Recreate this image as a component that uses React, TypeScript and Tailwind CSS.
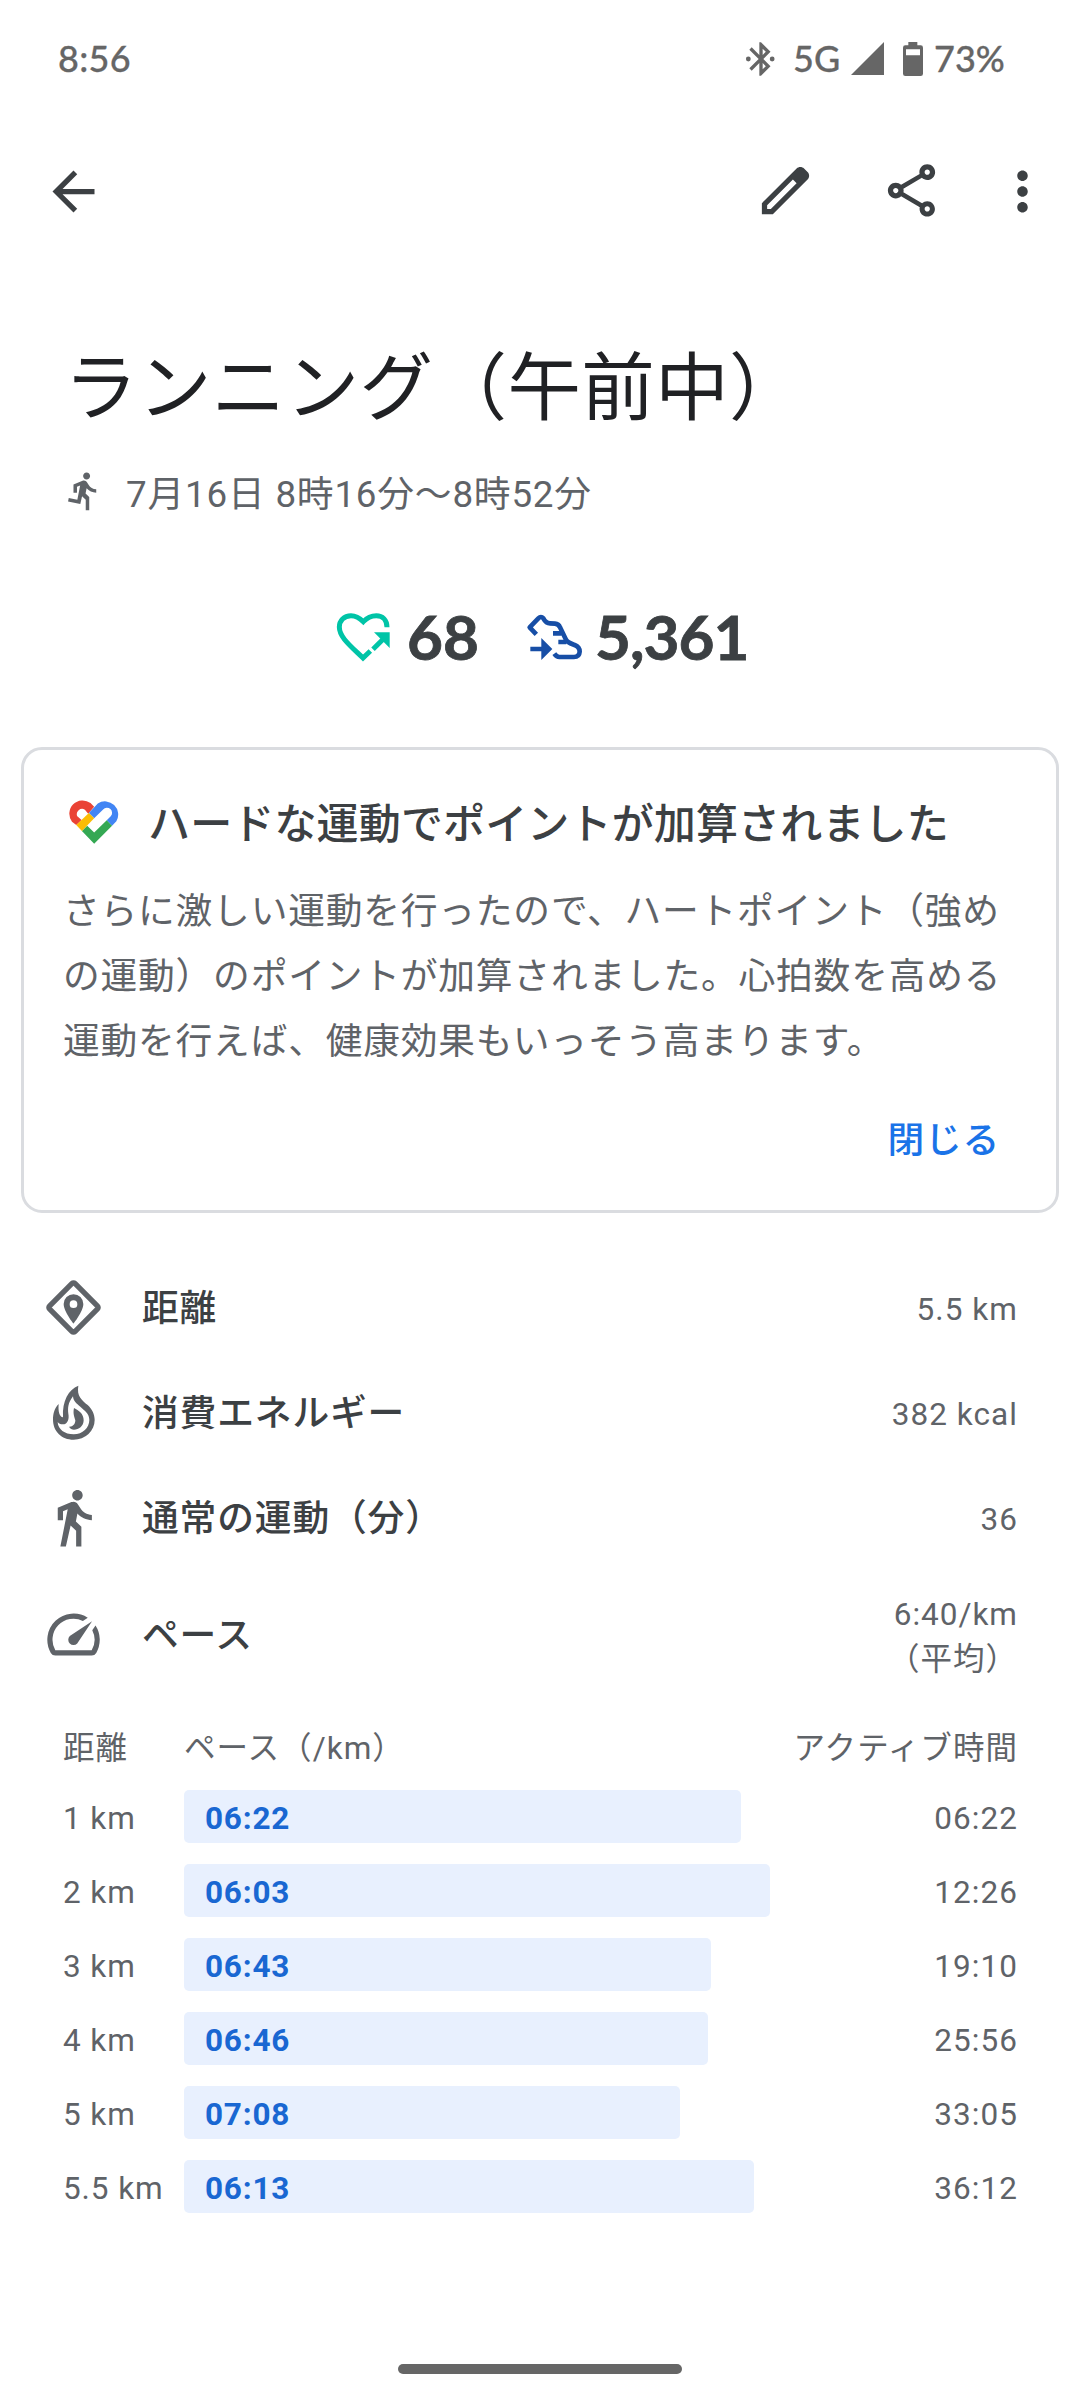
import type { ReactNode } from 'react'
import { MdArrowBack, MdMoreVert, MdOutlineShare, MdSpeed } from 'react-icons/md'

const splits = [
  { distance: '1 km', pace: '06:22', time: '06:22', width: 557 },
  { distance: '2 km', pace: '06:03', time: '12:26', width: 586 },
  { distance: '3 km', pace: '06:43', time: '19:10', width: 527 },
  { distance: '4 km', pace: '06:46', time: '25:56', width: 524 },
  { distance: '5 km', pace: '07:08', time: '33:05', width: 496 },
  { distance: '5.5 km', pace: '06:13', time: '36:12', width: 570 },
]

function BluetoothIcon() {
  return (
    <svg className="size-[40px]" viewBox="0 0 24 24" fill="currentColor">
      <path d="M17.71 7.71 12 2h-1v7.59L6.41 5 5 6.41 10.59 12 5 17.59 6.41 19 11 14.41V22h1l5.71-5.71-4.3-4.29 4.3-4.29zM13 5.83l1.88 1.88L13 9.59V5.83zm1.88 10.46L13 18.17v-3.76l1.88 1.88z" />
      <circle cx="4.4" cy="12" r="1.45" />
      <circle cx="18.7" cy="12" r="1.45" />
    </svg>
  )
}

function BatteryIcon() {
  return (
    <svg className="h-[34px] w-5" viewBox="0 0 60 102">
      <path
        fill="currentColor"
        fillRule="evenodd"
        d="M16 0h27v10h10q7 0 7 7v78q0 7-7 7H7q-7 0-7-7V17q0-7 7-7h9zM9 22v18h42V22z"
      />
    </svg>
  )
}

function EditIcon() {
  return (
    <svg className="size-[63px]" viewBox="0 0 24 24" fill="currentColor">
      <path d="M20.41 4.94l-1.35-1.35c-.78-.78-2.05-.78-2.83 0L3 16.82V21h4.18L20.41 7.77c.79-.78.79-2.05 0-2.83zm-14 14.12L5 19v-1.36l9.82-9.82 1.41 1.41-9.82 9.83z" />
    </svg>
  )
}

function RunIcon() {
  return (
    <svg className="size-[42px]" viewBox="0 0 24 24" fill="currentColor">
      <path d="M13.49 5.48c1.1 0 2-.9 2-2s-.9-2-2-2-2 .9-2 2 .9 2 2 2zm-3.6 13.9l1-4.4 2.1 2v6h2v-7.5l-2.1-2 .6-3c1.3 1.5 3.3 2.5 5.5 2.5v-2c-1.9 0-3.5-1-4.3-2.4l-1-1.6c-.4-.6-1-1-1.7-1-.3 0-.5.1-.8.1l-5.2 2.2v4.7h2v-3.4l1.8-.7-1.6 8.1-4.9-1-.4 2 7 1.4z" />
    </svg>
  )
}

function HeartPointsIcon() {
  return (
    <svg className="h-[50px] w-[56px]" viewBox="34 38 168 150">
      <path
        fill="none"
        stroke="#00c4a7"
        strokeWidth="15"
        d="M187 84C187 61 173 49 155 49C138 49 126 56 116 67C105 56 94 49 79 49C58 49 44 64 44 83C44 114 78 140 115 176L137 155"
      />
      <path fill="none" stroke="#00c4a7" strokeWidth="15" d="M145 150l34-34" />
      <path fill="#00c4a7" d="M148 99h47v47z" />
    </svg>
  )
}

function StepsIcon() {
  return (
    <svg className="h-[50px] w-[58px]" viewBox="31 38 174 150">
      <g fill="none" stroke="#174ea6" strokeWidth="14">
        <path
          strokeLinejoin="round"
          d="M62 105L42 84L68 57Q76 49 83 57Q91 72 103 72L118 73Q129 74 133 84L150 119C153 129 166 133 177 137Q192 143 192 157Q191 173 175 173H131Q123 173 116 163"
        />
        <path d="M112 102h26M128 128h24M44 149h36" />
      </g>
      <path fill="#174ea6" d="M77 116l33 33-33 33z" />
    </svg>
  )
}

function FitLogo() {
  return (
    <svg className="h-[45px] w-[52px]" viewBox="84 60 157 135">
      <path fill="#ea4335" d="M109 138L96 128A40 40 0 0 1 152 72L163 83L145 104L135 92A16 16 0 0 0 112 112L125 123Z" />
      <path fill="#4285f4" d="M147 102L174 73A40 40 0 0 1 230 127L217 140L201 124L213 112A15.5 15.5 0 0 0 190 91L163 118Z" />
      <path fill="#34a853" d="M201 124L217 140L163 195L126 156L142 140L163 161Z" />
      <path fill="#fbbc04" d="M109 138L147 102L163 118L126 156Z" />
    </svg>
  )
}

function DistanceIcon() {
  return (
    <svg className="size-[63px]" viewBox="0 0 189 189">
      <rect
        x="40.5"
        y="40.5"
        width="108"
        height="108"
        rx="6"
        fill="none"
        stroke="currentColor"
        strokeWidth="16"
        transform="rotate(45 94.5 94.5)"
      />
      <path
        fill="currentColor"
        fillRule="evenodd"
        d="M94.5 143S65 106 65 84a29.5 29.5 0 0 1 59 0c0 22-29.5 59-29.5 59zM94.5 96a11.5 11.5 0 1 0 0-23 11.5 11.5 0 0 0 0 23z"
      />
    </svg>
  )
}

function FireIcon() {
  return (
    <svg className="size-[63px]" viewBox="0 0 189 189" fill="currentColor">
      <path
        fillRule="evenodd"
        d="M109 14C104 45 118 56 137 72C150 84 158 100 158 117A63 59 0 0 1 95 176C58 176 33 150 33 116C33 98 38 80 50 69C48 90 52 108 63 109C60 60 80 25 109 14ZM93 46C78 66 77 80 79 98C82 112 78 130 62 130C55 130 50 127 47 123C48 145 68 160 95 160C122 160 142 140 142 117C142 97 128 90 115 77C103 68 94 60 93 46Z"
      />
      <path d="M96 81C110 88 125 98 125 118C125 136 110 146 96 146C90 146 84 142 81 137C92 138 100 130 100 118C98 110 92 98 96 81Z" />
    </svg>
  )
}

function WalkIcon() {
  return (
    <svg className="size-[63px]" viewBox="0 0 24 24" fill="currentColor">
      <path d="M13.5 5.5c1.1 0 2-.9 2-2s-.9-2-2-2-2 .9-2 2 .9 2 2 2zM9.8 8.9L7 23h2.1l1.8-8 2.1 2v6h2v-7.5l-2.1-2 .6-3C14.8 12 16.8 13 19 13v-2c-1.9 0-3.5-1-4.3-2.4l-1-1.6c-.4-.6-1-1-1.7-1-.3 0-.5.1-.8.1L6 8.3V13h2V9.6l1.8-.7" />
    </svg>
  )
}

function StatRow({ icon, label, children }: { icon: ReactNode; label: string; children: ReactNode }) {
  return (
    <div className="flex h-[105px] items-center">
      {icon}
      <p className="ml-[37px] flex-1 pt-0.5 text-[36.75px] font-medium tracking-[0.85px] text-[#3c4043]">{label}</p>
      <p className="pt-[5px] text-[31.5px] tracking-[1.05px]">{children}</p>
    </div>
  )
}

export default function App() {
  return (
    <main className="flex h-[2400px] w-[1080px] flex-col overflow-hidden bg-white font-[Roboto,'Noto_Sans_CJK_JP',sans-serif] text-[#5f6368]">
      <div className="flex h-[110px] items-center pt-[7px] pl-[58px] font-[Lato,sans-serif] text-[36px] font-medium text-[#666] [-webkit-text-stroke:0.3px]">
        <span className="w-[683px] pb-0.5 tracking-[0.3px]">8:56</span>
        <BluetoothIcon />
        <span className="ml-[12px] w-[58px] pb-0.5">5G</span>
        <svg className="h-[33px] w-[33px]" viewBox="0 0 33 33">
          <path fill="currentColor" d="M33 0v33H0z" />
        </svg>
        <span className="mr-[11px] ml-[19px]">
          <BatteryIcon />
        </span>
        <span className="pb-0.5">73%</span>
      </div>

      <div className="flex h-[161px] items-center pl-[42px] text-[#3c4043]">
        <MdArrowBack className="mt-px mr-auto size-[63px]" />
        <EditIcon />
        <MdOutlineShare className="ml-[63px] size-[63px]" />
        <MdMoreVert className="mt-px mr-[26px] ml-[48px] size-[63px]" />
      </div>

      <h1 className="mt-[66px] pl-[64px] text-[73.5px] leading-[104px] tracking-[0.4px] text-[#202124]">ランニング（午前中）</h1>
      <div className="mt-[26px] flex h-12 items-center pl-[63px] text-[36.75px] tracking-[0.8px]">
        <RunIcon />
        <p className="ml-[21px] pt-[7px]">7月16日 8時16分〜8時52分</p>
      </div>

      <div className="mt-[82px] flex h-20 items-center pl-[336px] font-[Lato,sans-serif] text-[62px] font-bold text-[#3c4043]">
        <HeartPointsIcon />
        <span className="ml-[15px] w-[119px] pb-0.5 [-webkit-text-stroke:0.8px]">68</span>
        <StepsIcon />
        <span className="ml-[11px] pb-0.5 tracking-[-1px] [-webkit-text-stroke:0.8px]">5,361</span>
      </div>

      <section className="mx-[21px] mt-[70px] h-[466px] rounded-[21px] border-3 border-[#dadce0] px-[39px]">
        <div className="mt-[38px] flex h-[66px] items-center pl-[5px]">
          <FitLogo />
          <h2 className="ml-[28px] pt-[6px] text-[42px] font-medium tracking-[0.15px] whitespace-nowrap text-[#3c4043]">
            ハードな運動でポイントが加算されました
          </h2>
        </div>
        <p className="mt-[25px] text-[36.75px] leading-[65px] tracking-[0.78px] whitespace-nowrap">
          さらに激しい運動を行ったので、ハートポイント（強め
          <br />
          の運動）のポイントが加算されました。心拍数を高める
          <br />
          運動を行えば、健康効果もいっそう高まります。
        </p>
        <button className="mt-[40px] ml-auto block pr-[17px] text-[36.75px] leading-[54px] font-medium tracking-[0.78px] text-[#1a73e8]">
          閉じる
        </button>
      </section>

      <section className="mt-[42px] pr-[62px] pl-[42px]">
        <StatRow icon={<DistanceIcon />} label="距離">
          5.5 km
        </StatRow>
        <StatRow icon={<FireIcon />} label="消費エネルギー">
          382 kcal
        </StatRow>
        <StatRow icon={<WalkIcon />} label="通常の運動（分）">
          36
        </StatRow>
        <div className="flex h-[129px] items-center">
          <MdSpeed className="size-[63px]" />
          <p className="ml-[37px] flex-1 pt-0.5 text-[36.75px] font-medium tracking-[0.85px] text-[#3c4043]">ペース</p>
          <p className="pt-[5px] text-right text-[31.5px] leading-[45px] tracking-[1px]">
            6:40/km
            <br />
            （平均）
          </p>
        </div>
      </section>

      <section className="mt-[26px] pr-[62px] pl-[63px] text-[31.5px] tracking-[1.05px]">
        <div className="flex h-12 items-center">
          <span className="w-[121px]">距離</span>
          <span className="flex-1">ペース（/km）</span>
          <span>アクティブ時間</span>
        </div>
        <div className="mt-[17px] flex flex-col gap-[21px]">
          {splits.map((split) => (
            <div key={split.distance} className="flex h-[53px] items-center">
              <span className="w-[121px] pt-[4px] tracking-[0.9px] whitespace-nowrap">{split.distance}</span>
              <div
                className="flex h-[53px] items-center rounded-[5px] bg-[#e8f0fe] pt-[4px] pl-[21px] font-bold tracking-[0.8px] text-[#1967d2]"
                style={{ width: split.width }}
              >
                {split.pace}
              </div>
              <span className="ml-auto pt-[4px]">{split.time}</span>
            </div>
          ))}
        </div>
      </section>

      <div className="mx-auto mt-auto mb-[26px] h-[10px] w-[284px] rounded-full bg-[#666]" />
    </main>
  )
}
